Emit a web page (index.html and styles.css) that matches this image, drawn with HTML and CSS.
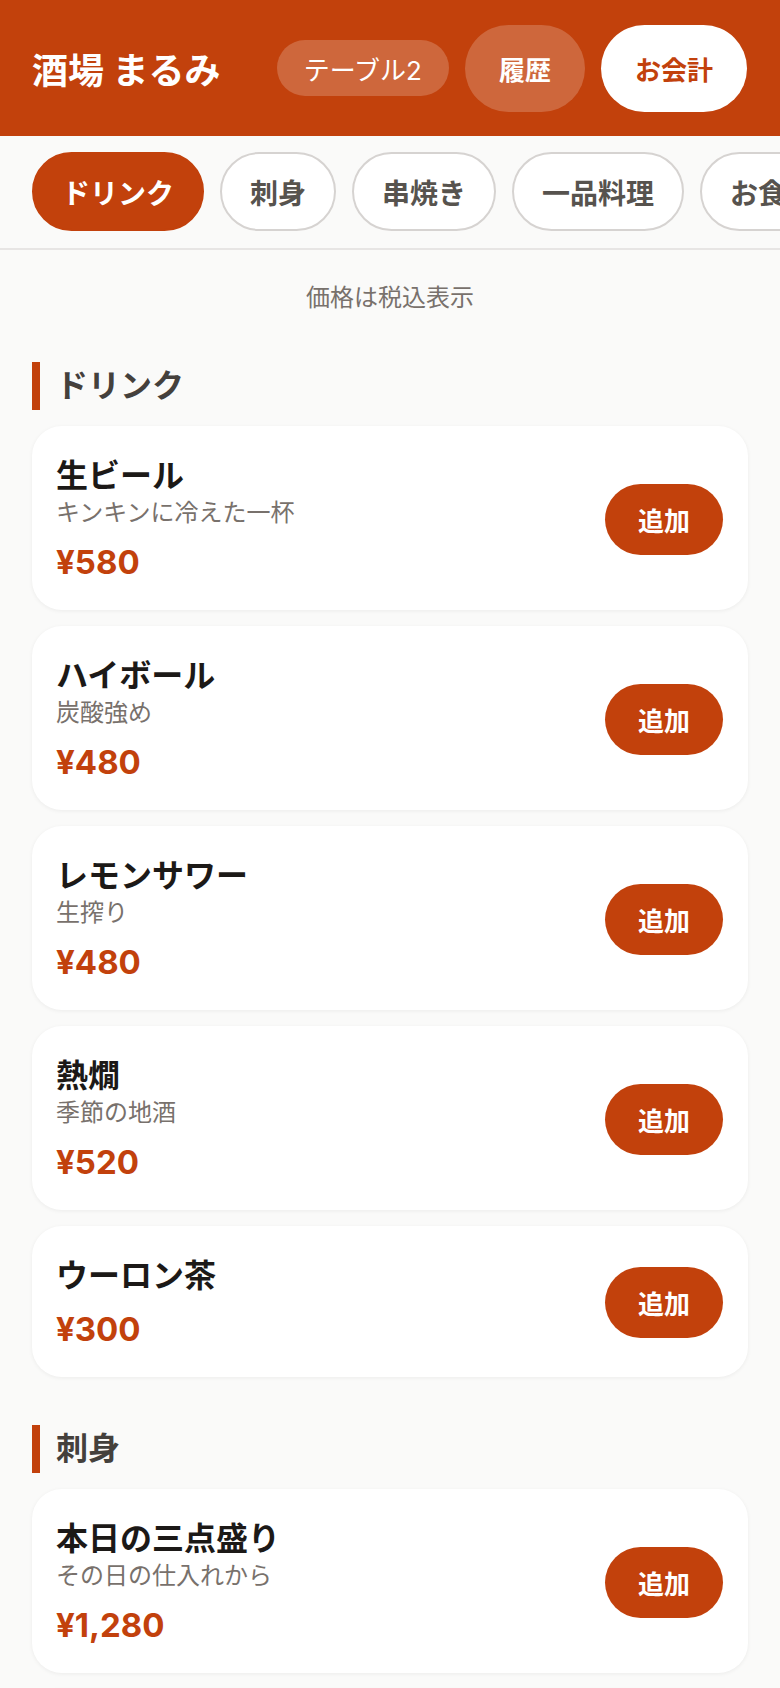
FILE: index.html
```html
<!DOCTYPE html>
<html lang="ja">
<head>
    <meta charset="utf-8">
    <title>酒場 まるみ</title>
    <link rel="stylesheet" href="styles.css">
</head>
<body>

    <header class="top-bar">
        <h1 class="shop-name">酒場 まるみ</h1>
        <div class="top-actions">
            <span class="table-tag">テーブル2</span>
            <button class="history-btn">履歴</button>
            <button class="checkout-btn">お会計</button>
        </div>
    </header>

    <nav class="tabs">
        <button class="tab active">ドリンク</button>
        <button class="tab">刺身</button>
        <button class="tab">串焼き</button>
        <button class="tab">一品料理</button>
        <button class="tab">お食事</button>
        <button class="tab">デザート</button>
    </nav>

    <p class="tax-note">価格は税込表示</p>

    <section class="menu-section">
        <h2 class="section-title">ドリンク</h2>

        <div class="item">
            <div class="item-info">
                <div class="item-name">生ビール</div>
                <div class="item-desc">キンキンに冷えた一杯</div>
                <div class="item-price">¥580</div>
            </div>
            <button class="add-btn">追加</button>
        </div>

        <div class="item">
            <div class="item-info">
                <div class="item-name">ハイボール</div>
                <div class="item-desc">炭酸強め</div>
                <div class="item-price">¥480</div>
            </div>
            <button class="add-btn">追加</button>
        </div>

        <div class="item">
            <div class="item-info">
                <div class="item-name">レモンサワー</div>
                <div class="item-desc">生搾り</div>
                <div class="item-price">¥480</div>
            </div>
            <button class="add-btn">追加</button>
        </div>

        <div class="item">
            <div class="item-info">
                <div class="item-name">熱燗</div>
                <div class="item-desc">季節の地酒</div>
                <div class="item-price">¥520</div>
            </div>
            <button class="add-btn">追加</button>
        </div>

        <div class="item">
            <div class="item-info">
                <div class="item-name">ウーロン茶</div>
                <div class="item-price">¥300</div>
            </div>
            <button class="add-btn">追加</button>
        </div>
    </section>

    <section class="menu-section">
        <h2 class="section-title">刺身</h2>

        <div class="item">
            <div class="item-info">
                <div class="item-name">本日の三点盛り</div>
                <div class="item-desc">その日の仕入れから</div>
                <div class="item-price">¥1,280</div>
            </div>
            <button class="add-btn">追加</button>
        </div>

        <div class="item">
            <div class="item-info">
                <div class="item-name">まぐろ赤身</div>
                <div class="item-desc">鮮度抜群</div>
                <div class="item-price">¥780</div>
            </div>
            <button class="add-btn">追加</button>
        </div>
    </section>

</body>
</html>
```

FILE: styles.css
```css
body {
    margin: 0;
    background-color: #fafaf9;
    font-family: Inter, "Noto Sans CJK JP", sans-serif;
    color: #1c1917;
    overflow: hidden;
}
button {
    font-family: inherit;
    border: none;
    cursor: pointer;
}

/* header */
.top-bar {
    height: 136px;
    padding: 0 33px 0 32px;
    background-color: #c2410c;
    display: flex;
    align-items: center;
    justify-content: space-between;
}
.shop-name {
    margin: 0;
    font-size: 36px;
    font-weight: bold;
    color: white;
}
.top-actions {
    display: flex;
    align-items: center;
    gap: 16px;
}
.table-tag {
    height: 56px;
    padding: 0 27px;
    display: flex;
    align-items: center;
    border-radius: 28px;
    background-color: rgba(255, 255, 255, 0.2);
    color: white;
    font-size: 26px;
}
.history-btn,
.checkout-btn {
    height: 87px;
    padding: 0 34px;
    border-radius: 44px;
    font-size: 26px;
    font-weight: bold;
}
.history-btn {
    background-color: rgba(255, 255, 255, 0.2);
    color: white;
}
.checkout-btn {
    background-color: white;
    color: #c2410c;
}

/* category tabs */
.tabs {
    display: flex;
    gap: 16px;
    padding: 16px 32px 17px;
    border-bottom: 2px solid #e7e5e4;
    white-space: nowrap;
    overflow: hidden;
}
.tab {
    flex-shrink: 0;
    height: 79px;
    padding: 0 28px;
    border: 2px solid #d6d3d1;
    border-radius: 40px;
    background-color: white;
    color: #57534e;
    font-size: 28px;
    font-weight: bold;
}
.tab.active {
    background-color: #c2410c;
    border-color: #c2410c;
    color: white;
}

.tax-note {
    margin: 30px 0 46px;
    text-align: center;
    font-size: 24px;
    line-height: 36px;
    color: #78716c;
}

/* menu */
.menu-section {
    padding: 0 32px;
}
.menu-section + .menu-section {
    margin-top: 48px;
}
.section-title {
    margin: 0 0 16px;
    padding-left: 16px;
    border-left: 8px solid #c2410c;
    font-size: 32px;
    line-height: 48px;
    color: #44403c;
}
.item {
    display: flex;
    align-items: center;
    justify-content: space-between;
    margin-bottom: 16px;
    padding: 30px 25px 28px 24px;
    background-color: white;
    border-radius: 30px;
    box-shadow: 0 1px 4px rgba(0, 0, 0, 0.06);
}
.item-name {
    font-size: 32px;
    font-weight: bold;
    line-height: 40px;
}
.item-desc {
    margin-top: 1px;
    font-size: 24px;
    line-height: 32px;
    color: #78716c;
}
.item-price {
    margin-top: 13px;
    font-size: 33px;
    font-weight: bold;
    line-height: 40px;
    color: #c2410c;
}
.add-btn {
    height: 71px;
    padding: 0 33px;
    border-radius: 36px;
    background-color: #c2410c;
    color: white;
    font-size: 26px;
    font-weight: bold;
}
```
